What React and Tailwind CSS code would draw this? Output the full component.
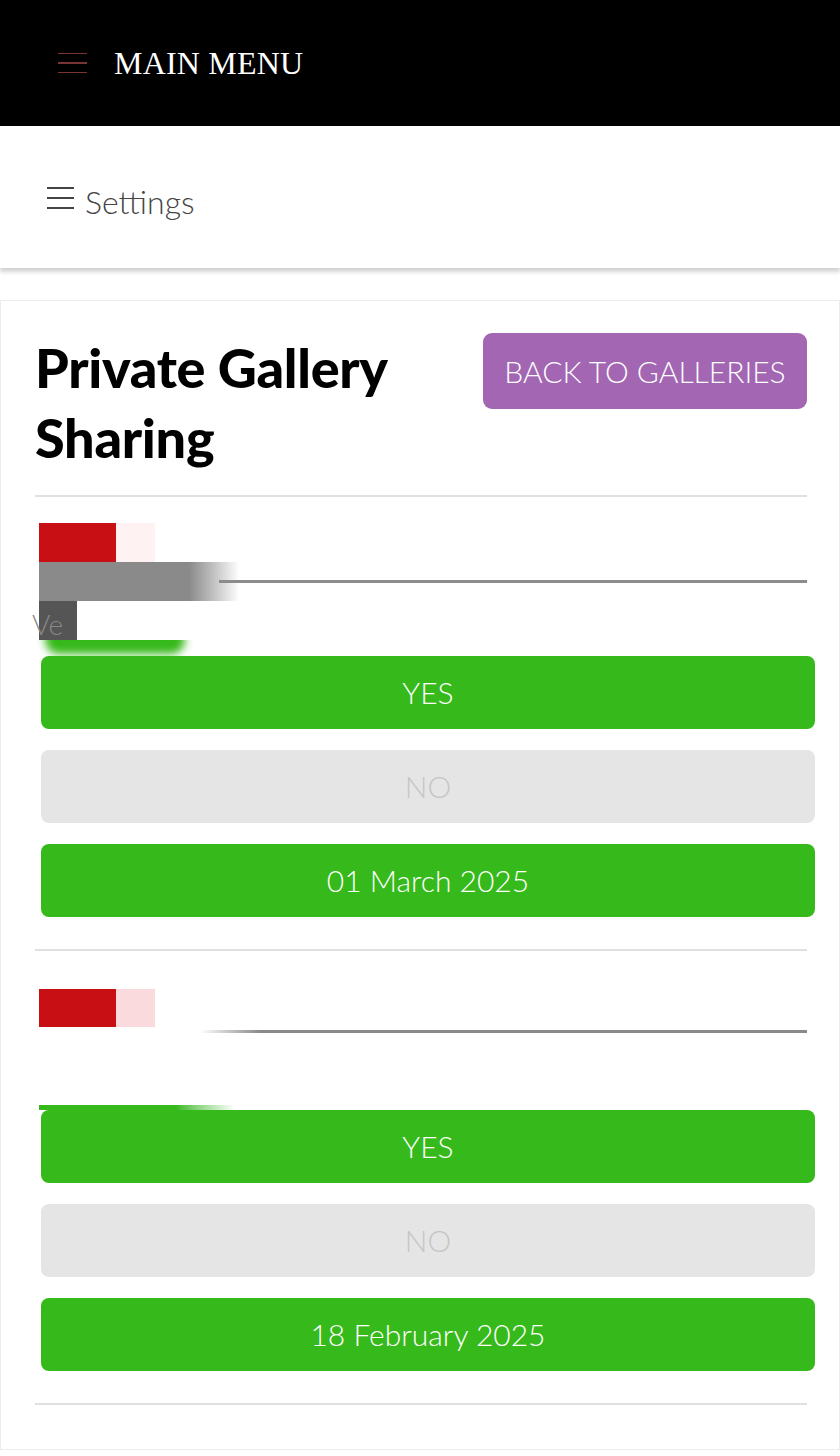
import React from 'react';

const sans = { fontFamily: 'Lato, "Open Sans", sans-serif' };

// Full-width action button used for YES / NO / date rows
function Pill({ label, active }) {
  return (
    <div
      className={`ml-[6px] w-[774px] h-[73px] rounded-[8px] flex items-center justify-center text-[30px] font-light ${
        active ? 'bg-[#36b91a] text-white' : 'bg-[#e5e5e5] text-[#c6c6c6]'
      }`}
    >
      {label}
    </div>
  );
}

function ShareBlock({ first, date }) {
  return (
    <div className="flex flex-col">
      {/* placeholder rows left over from a half-rendered widget */}
      {first ? (
        <>
          <div className="flex mt-[26px] ml-[4px] h-[39px]">
            <div className="w-[77px] bg-[#c81014]" />
            <div className="w-[39px] bg-[#fff2f2]" />
          </div>
          <div className="flex ml-[4px] h-[39px] items-center">
            <div className="w-[200px] h-full bg-gradient-to-r from-[#8a8a8a] from-75% to-white" />
            <div className="flex-1 h-[3px] bg-[#8c8c8c] -ml-[20px]" />
          </div>
          <div className="relative flex h-[39px]">
            <div className="ml-[4px] w-[38px] bg-[#555]" />
            <span className="absolute -left-[3px] top-[2px] text-[28px] font-light text-[#888]">
              Ve
            </span>
          </div>
          <div className="h-[16px] overflow-hidden">
            <div className="ml-[10px] -mt-[14px] w-[140px] h-[28px] rounded-full bg-[#36b91a] blur-[4px]" />
          </div>
        </>
      ) : (
        <>
          <div className="flex mt-[38px] ml-[4px] h-[38px]">
            <div className="w-[77px] bg-[#c81014]" />
            <div className="w-[39px] bg-[#fadadd]" />
          </div>
          <div className="flex h-[9px] items-center">
            <div className="w-[165px]" />
            <div className="flex-1 h-[3px] bg-gradient-to-r from-white to-[#8a8a8a] to-10%" />
          </div>
          <div className="h-[69px]" />
          <div className="ml-[4px] w-[196px] h-[5px] bg-gradient-to-r from-[#36b91a] from-70% to-white" />
        </>
      )}

      <div className="flex flex-col gap-[21px]">
        <Pill label="YES" active />
        <Pill label="NO" />
        <Pill label={date} active />
      </div>

      <div className="mt-[32px] h-[2px] bg-[#e0e0e0]" />
    </div>
  );
}

export default function App() {
  return (
    <div className="w-[840px] min-h-[1456px] bg-white" style={sans}>
      {/* Top black bar */}
      <div className="h-[126px] bg-black flex items-center pl-[58px]">
        <div className="flex flex-col gap-[8px] w-[29px]">
          <div className="h-[1.5px] bg-[#7a3434]" />
          <div className="h-[1.5px] bg-[#7a3434]" />
          <div className="h-[1.5px] bg-[#7a3434]" />
        </div>
        <span
          className="ml-[27px] text-[32px] text-white tracking-[0.2px]"
          style={{ fontFamily: '"Liberation Serif", serif' }}
        >
          MAIN MENU
        </span>
      </div>

      {/* Settings bar */}
      <div className="h-[142px] flex items-center pl-[47px] shadow-[0_4px_4px_rgba(0,0,0,0.18)]">
        <div className="flex flex-col gap-[8px] w-[27px] mt-[2px]">
          <div className="h-[2px] bg-[#444]" />
          <div className="h-[2px] bg-[#444]" />
          <div className="h-[2px] bg-[#444]" />
        </div>
        <span className="ml-[11px] mt-[10px] text-[32px] font-light text-[#444]">Settings</span>
      </div>

      {/* Main card */}
      <div className="mt-[32px] w-[840px] border border-[#ececec] pt-[32px] pb-[44px] pl-[34px] pr-[32px]">
        <div className="flex justify-between items-start">
          <h1 className="text-[54px] leading-[70px] font-black text-black tracking-[-0.3px]">
            Private Gallery
            <br />
            Sharing
          </h1>
          <button className="w-[324px] h-[76px] rounded-[9px] bg-[#a366b3] text-white text-[30px] font-light">
            BACK TO GALLERIES
          </button>
        </div>
        <div className="mt-[22px] h-[2px] bg-[#e0e0e0]" />

        <ShareBlock first date="01 March 2025" />
        <ShareBlock date="18 February 2025" />
      </div>
    </div>
  );
}
